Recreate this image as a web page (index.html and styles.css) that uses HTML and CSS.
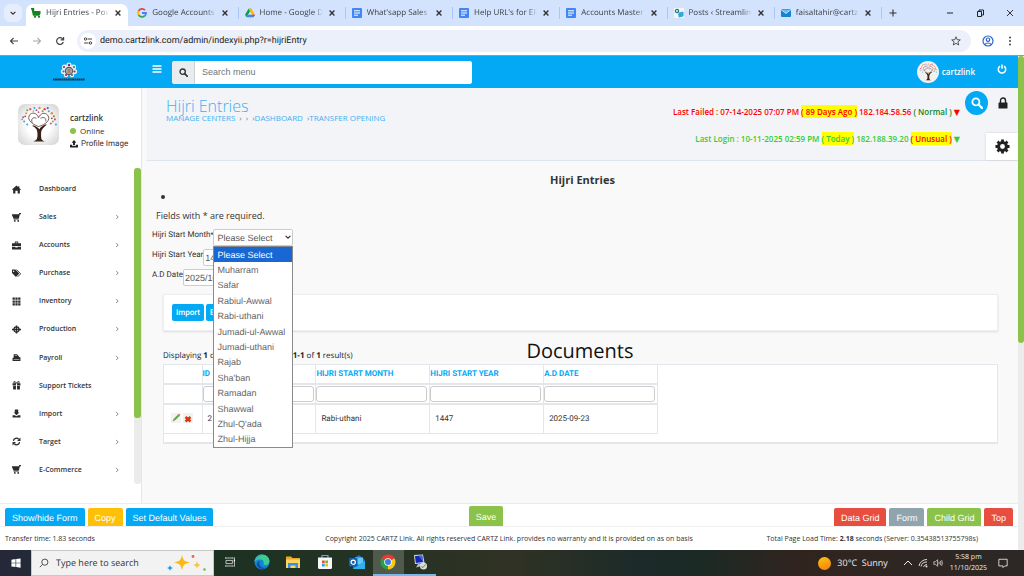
FILE: index.html
```html
<!DOCTYPE html>
<html lang="en">
<head>
<meta charset="utf-8">
<meta name="viewport" content="width=device-width, initial-scale=1">
<title>Hijri Entries</title>
<link rel="stylesheet" href="styles.css">
</head>
<body>
<svg class="sprite" aria-hidden="true">
  <symbol id="i-x" viewBox="0 0 10 10"><path d="M2 2l6 6M8 2l-6 6" stroke="currentColor" stroke-width="1.7" fill="none"/></symbol>
  <symbol id="i-doc" viewBox="0 0 10 10"><rect width="10" height="10" rx="1" fill="#4285f4"/><path d="M2 2.8h6M2 5h6M2 7.2h4" stroke="#fff" stroke-width="1"/></symbol>
  <symbol id="i-right" viewBox="0 0 10 10"><path d="M3.5 1.5L7 5 3.5 8.5" stroke="currentColor" stroke-width="1.6" fill="none"/></symbol>
  <symbol id="i-cart" viewBox="0 0 16 16"><path d="M0 2h12l1-2h3v2h-2l-2 8H4v1h8v1H3v-2L0 4z" fill="currentColor"/><circle cx="5" cy="14" r="1.6" fill="currentColor"/><circle cx="11" cy="14" r="1.6" fill="currentColor"/></symbol>
  <symbol id="i-search" viewBox="0 0 16 16"><circle cx="6.5" cy="6.5" r="4.7" fill="none" stroke="currentColor" stroke-width="2.4"/><path d="M10 10l4.5 4.5" stroke="currentColor" stroke-width="3" stroke-linecap="round"/></symbol>
  <symbol id="i-tree" viewBox="0 0 40 40">
    <path d="M15 36.500c3-1 4-2 4-7 0-4-1-6-5-8l.6-.8c3 1 5 2 6.200 4 1.200-2 3-4 6.500-5l.6.8c-4 3-5.400 5-5.400 9 0 5 .5 6 3.500 7z" fill="#3b2015"/>
    <path d="M20 22C12 19 8 14 12 10c3-2.500 7-.5 8 3.500 2-4.500 6-6 9-2.500 3.500 4.500-2 9-9 11zM14 18c-2-3 1-6 4-4M27 17c1-3-2-5-5-3" fill="none" stroke="#6b5448" stroke-width="0.9"/>
    <g fill="#e8457c"><circle cx="5" cy="13" r="1"/><circle cx="12" cy="5" r="1.1"/><circle cx="26" cy="5" r="1.2"/><circle cx="36" cy="15" r="1"/><circle cx="20" cy="8" r=".9"/><circle cx="32" cy="19" r="1"/></g>
    <g fill="#f58a3c"><circle cx="8" cy="9" r="1"/><circle cx="21" cy="4" r="1.2"/><circle cx="33" cy="9" r="1.2"/><circle cx="15" cy="7" r=".8"/></g>
    <g fill="#42a5dd"><circle cx="6" cy="17" r="1"/><circle cx="16" cy="4" r="1"/><circle cx="30" cy="7" r="1"/><circle cx="37" cy="20" r="1"/><circle cx="9" cy="20" r="1"/></g>
    <g fill="#65ad3d"><circle cx="9" cy="6" r="1"/><circle cx="24" cy="7" r="1"/><circle cx="35" cy="12" r="1.1"/><circle cx="34" cy="17" r=".9"/><circle cx="4" cy="15" r=".8"/></g>
    <g fill="#8c4ba6"><circle cx="18" cy="6" r=".9"/><circle cx="29" cy="4" r="1"/><circle cx="7" cy="12" r=".9"/><circle cx="33" cy="14" r=".9"/></g>
  </symbol>
</svg>

<div class="browser">
  <div class="tabstrip">
    <button class="tab-search" aria-label="Search tabs"><svg viewBox="0 0 10 10"><path d="M2 3.5l3 3 3-3" stroke="#333" stroke-width="1.5" fill="none"/></svg></button>
    <div class="tabs">
      <div class="tab tab-active"><svg class="fav" viewBox="0 0 10 10"><path d="M0 .5h2.500v5.800H9M1 .5L2.500 7h6" stroke="#14851d" stroke-width="1.400" fill="none"/><path d="M3 3h6.500v3H3z" fill="#14851d"/><circle cx="4" cy="8.800" r="1.100" fill="#14851d"/><circle cx="8" cy="8.800" r="1.100" fill="#14851d"/></svg><span>Hijri Entries - Power</span><button aria-label="Close tab"><svg><use href="#i-x"/></svg></button></div>
      <div class="tab"><svg class="fav" viewBox="0 0 10 10" fill="none" stroke-width="1.800"><path d="M8 2.200A4 4 0 0 0 1.600 3" stroke="#ea4335"/><path d="M1.600 3a4 4 0 0 0 0 4" stroke="#fbbc05"/><path d="M1.600 7a4 4 0 0 0 6 1" stroke="#34a853"/><path d="M7.600 8A4 4 0 0 0 9 5H5" stroke="#4285f4"/></svg><span>Google Accounts</span><button aria-label="Close tab"><svg><use href="#i-x"/></svg></button></div>
      <div class="tab"><svg class="fav" viewBox="0 0 10 10"><path d="M3.500.7h3L3 6.800 1.600 9.300 0 6.700z" fill="#0f9d58"/><path d="M3.500.7h3L10 6.700H7z" fill="#ffba00"/><path d="M3 6.700h7L8.400 9.300H1.600z" fill="#4285f4"/><path d="M7 6.700h3L8.400 9.300z" fill="#ea4335"/></svg><span>Home - Google Drive</span><button aria-label="Close tab"><svg><use href="#i-x"/></svg></button></div>
      <div class="tab"><svg class="fav"><use href="#i-doc"/></svg><span>What'sapp Sales Ma</span><button aria-label="Close tab"><svg><use href="#i-x"/></svg></button></div>
      <div class="tab"><svg class="fav"><use href="#i-doc"/></svg><span>Help URL's for ERP S</span><button aria-label="Close tab"><svg><use href="#i-x"/></svg></button></div>
      <div class="tab"><svg class="fav"><use href="#i-doc"/></svg><span>Accounts Master Da</span><button aria-label="Close tab"><svg><use href="#i-x"/></svg></button></div>
      <div class="tab"><svg class="fav" viewBox="0 0 10 10"><rect width="10" height="10" rx="1" fill="#f4f6e8"/><circle cx="3" cy="3" r="1.600" fill="none" stroke="#167a9c" stroke-width="1.300"/><path d="M5 5l4-1v4l-4 1zM4 6l3 3" fill="#35a8d8" stroke="#35a8d8"/></svg><span>Posts ‹ Streamline Y</span><button aria-label="Close tab"><svg><use href="#i-x"/></svg></button></div>
      <div class="tab"><svg class="fav" viewBox="0 0 10 10"><rect y="1" width="10" height="8" rx="1" fill="#1483d0"/><path d="M0 1.500l5 4 5-4" fill="#5cc0f7" stroke="#fff" stroke-width=".7"/></svg><span>faisaltahir@cartzlink</span><button aria-label="Close tab"><svg><use href="#i-x"/></svg></button></div>
    </div>
    <div class="window-controls">
      <button aria-label="New tab"><svg viewBox="0 0 10 10"><path d="M5 1.500v7M1.500 5h7" stroke="#333" stroke-width="1.100"/></svg></button>
      <button class="push" aria-label="Minimize"><svg viewBox="0 0 10 10"><path d="M2 5h6" stroke="#222"/></svg></button>
      <button aria-label="Restore"><svg viewBox="0 0 10 10"><path d="M2.500 3.500h4v5h-4zM4 3.500V2h4.500v5H6.500" stroke="#222" fill="none"/></svg></button>
      <button aria-label="Close"><svg viewBox="0 0 10 10"><path d="M2 2l6 6M8 2L2 8" stroke="#222" stroke-width=".9"/></svg></button>
    </div>
  </div>
  <div class="toolbar">
    <button aria-label="Back"><svg viewBox="0 0 10 10"><path d="M9 5H1.500M4.500 2L1.500 5l3 3" stroke="#444" stroke-width="1.100" fill="none"/></svg></button>
    <button aria-label="Forward"><svg viewBox="0 0 10 10"><path d="M1 5h7.500M5.500 2l3 3-3 3" stroke="#aaa" stroke-width="1.100" fill="none"/></svg></button>
    <button aria-label="Reload"><svg viewBox="0 0 10 10"><path d="M8.300 6A3.400 3.400 0 1 1 7.500 2.700L8.500 3.700M8.600 1v2.900H5.700" stroke="#444" stroke-width="1.200" fill="none"/></svg></button>
    <div class="address">
      <button class="site-info" aria-label="Site information"><svg viewBox="0 0 10 10"><path d="M4.500 3H9M1 7h4.500" stroke="#444" stroke-width="1.100"/><circle cx="2.500" cy="3" r="1.200" fill="none" stroke="#444"/><circle cx="7.500" cy="7" r="1.200" fill="none" stroke="#444"/></svg></button>
      <input type="text" aria-label="Address" value="demo.cartzlink.com/admin/indexyii.php?r=hijriEntry">
      <button aria-label="Bookmark"><svg viewBox="0 0 10 10"><path d="M5 .8l1.200 2.900 3.100.2-2.400 2 .8 3.100L5 7.300 2.300 9l.8-3.100-2.400-2 3.100-.2z" fill="none" stroke="#444" stroke-width=".9"/></svg></button>
    </div>
    <button class="profile" aria-label="Profile"><svg viewBox="0 0 12 12"><circle cx="6" cy="6" r="5" fill="none" stroke="#2f67c8" stroke-width="1.200"/><circle cx="6" cy="4.700" r="1.700" fill="none" stroke="#2f67c8" stroke-width="1.200"/><path d="M3 9.500c1-2 5-2 6 0" fill="none" stroke="#2f67c8" stroke-width="1.200"/></svg></button>
    <button aria-label="Menu"><svg viewBox="0 0 10 10" fill="#444"><circle cx="5" cy="1.500" r="1"/><circle cx="5" cy="5" r="1"/><circle cx="5" cy="8.500" r="1"/></svg></button>
  </div>
</div>

<div class="viewport">
  <div class="page">
    <header class="app-header">
      <a class="logo" href="#" aria-label="Cart group"><svg viewBox="0 0 34 20"><g fill="#e8eef0"><circle cx="17" cy="3" r="2.600"/><circle cx="12.500" cy="5" r="2.600"/><circle cx="21.500" cy="5" r="2.600"/><circle cx="11.500" cy="9.500" r="2.600"/><circle cx="22.500" cy="9.500" r="2.600"/><circle cx="14" cy="13" r="2.300"/><circle cx="20" cy="13" r="2.300"/></g><circle cx="17" cy="9" r="3.600" fill="#a9b8b2" stroke="#5a5a62" stroke-width="1.200"/><g fill="#8d2a79"><circle cx="17" cy="3" r="1.200"/><circle cx="12" cy="5" r="1.100"/><circle cx="22.500" cy="9.500" r="1.100"/><circle cx="14" cy="13" r="1.100"/></g><g fill="#2b8a55"><circle cx="22" cy="5" r="1.100"/><circle cx="11.500" cy="9.500" r="1.100"/><circle cx="20" cy="13" r="1.100"/></g><path d="M15.500 8h3M15.500 10h3" stroke="#c0392b" stroke-width="1"/><path d="M1 17.500h32" stroke="#12344e" stroke-width="1.800" stroke-dasharray="1.500 .4 2 .4"/></svg></a>
      <button class="burger" aria-label="Toggle menu"><svg viewBox="0 0 10 10"><path d="M0.500 2h9M.5 5h9M.5 8h9" stroke="#fff" stroke-width="1.400"/></svg></button>
      <form class="menu-search">
        <button type="button" aria-label="Search"><svg><use href="#i-search"/></svg></button>
        <input type="text" placeholder="Search menu" aria-label="Search menu">
      </form>
      <a class="user" href="#"><svg><use href="#i-tree"/></svg>cartzlink</a>
      <button class="power" aria-label="Log out"><svg viewBox="0 0 10 10"><path d="M3 2.200a3.700 3.700 0 1 0 4 0M5 .5v4.300" stroke="#fff" stroke-width="1.500" fill="none"/></svg></button>
    </header>

    <div class="workspace">
      <aside class="sidebar">
        <div class="account">
          <svg class="portrait"><use href="#i-tree"/></svg>
          <div class="account-text">
            <strong>cartzlink</strong>
            <span><i class="dot"></i>Online</span>
            <a href="#"><svg viewBox="0 0 10 10"><path d="M5 0l3 3.500H6.200V6.500H3.800V3.500H2zM0 6h2.800v1.500h4.400V6H10v3.500H0z" fill="#222"/></svg>Profile Image</a>
          </div>
        </div>
        <div class="menu-scroll">
          <nav class="menu">
            <a href="#"><svg viewBox="0 0 16 16"><path d="M8 1L0 8l1 1 1-.8V15h4v-5h4v5h4V8.200l1 .8 1-1-3-2.600V2h-2v1.600z" fill="currentColor"/></svg><span>Dashboard</span></a>
            <a href="#"><svg><use href="#i-cart"/></svg><span>Sales</span><svg class="arrow"><use href="#i-right"/></svg></a>
            <a href="#"><svg viewBox="0 0 16 16"><path d="M5 4V1h6v3h5v5H0V4zm1.500 0h3V2.500h-3zM0 10h6v1.500h4V10h6v5H0z" fill="currentColor"/></svg><span>Accounts</span><svg class="arrow"><use href="#i-right"/></svg></a>
            <a href="#"><svg viewBox="0 0 16 16"><path d="M0 1h6l7 7-6 6-7-7z" fill="currentColor"/><circle cx="3" cy="4" r="1.200" fill="#fff"/><path d="M8 1l7.500 7.500L10 14" fill="none" stroke="currentColor" stroke-width="1.500"/></svg><span>Purchase</span><svg class="arrow"><use href="#i-right"/></svg></a>
            <a href="#"><svg viewBox="0 0 16 16"><path d="M1 1h4v4H1zm5 0h4v4H6zm5 0h4v4h-4zM1 6h4v4H1zm5 0h4v4H6zm5 0h4v4h-4zM1 11h4v4H1zm5 0h4v4H6zm5 0h4v4h-4z" fill="currentColor"/></svg><span>Inventory</span><svg class="arrow"><use href="#i-right"/></svg></a>
            <a href="#"><svg viewBox="0 0 16 16"><circle cx="8" cy="8" r="4.500" fill="none" stroke="currentColor" stroke-width="2.200"/><path d="M8 1v14M0 8h16" stroke="currentColor" stroke-width="2.400"/></svg><span>Production</span><svg class="arrow"><use href="#i-right"/></svg></a>
            <a href="#"><svg viewBox="0 0 16 16"><path d="M3 2h6l4 5 2 1v6H1V9l2-1zM5 4.500v1h4v-1zM3 11h10v1H3z" fill="currentColor" fill-rule="evenodd"/></svg><span>Payroll</span><svg class="arrow"><use href="#i-right"/></svg></a>
            <a href="#"><svg viewBox="0 0 16 16"><path d="M1 4h6v4H1zm8 0h6v4H9zM2 9h5v6H2zm7 0h5v6H9z" fill="currentColor"/><path d="M7 4C2 4 2 1 4 1s3 1 4 3c1-2 2-3 4-3s2 3-3 3" fill="none" stroke="currentColor" stroke-width="1.600"/></svg><span>Support Tickets</span></a>
            <a href="#"><svg viewBox="0 0 16 16"><path d="M5 1h6v5h2l-5 5-5-5h2zM1 11h4l3 2 3-2h4v4H1z" fill="currentColor"/></svg><span>Import</span><svg class="arrow"><use href="#i-right"/></svg></a>
            <a href="#"><svg viewBox="0 0 16 16"><path d="M2.500 7A5.500 5.500 0 0 1 12 4M13.500 9A5.500 5.500 0 0 1 4 12" fill="none" stroke="currentColor" stroke-width="2.200"/><path d="M15 1v6H9zM1 15V9h6z" fill="currentColor"/></svg><span>Target</span><svg class="arrow"><use href="#i-right"/></svg></a>
            <a href="#"><svg><use href="#i-cart"/></svg><span>E-Commerce</span><svg class="arrow"><use href="#i-right"/></svg></a>
          </nav>
          <div class="menu-track"><div class="menu-thumb"></div></div>
        </div>
      </aside>

      <main class="content">
        <section class="page-head">
          <div class="crumbs">
            <h1>Hijri Entries</h1>
            <p><a href="#">MANAGE CENTERS</a><b>›</b><b>›</b><b>›<a href="#">DASHBOARD</a></b><b>›<a href="#">TRANSFER OPENING</a></b></p>
          </div>
          <div class="logins">
            <p class="failed">Last Failed : 07-14-2025 07:07 PM <mark>( 89 Days Ago )</mark> 182.184.58.56 <span class="normal">( Normal )</span> <i>▼</i></p>
            <p class="login">Last Login : 10-11-2025 02:59 PM <mark>( Today )</mark> 182.188.39.20 <mark class="unusual">( Unusual )</mark> <i>▼</i></p>
          </div>
          <div class="tools">
            <div class="tool-row">
              <button class="round" aria-label="Find"><svg><use href="#i-search"/></svg></button>
              <button class="lock" aria-label="Lock"><svg viewBox="0 0 10 12"><path d="M2.500 6V3.500a2.500 2.500 0 0 1 5 0V6" fill="none" stroke="#222" stroke-width="1.400"/><rect x=".5" y="5.500" width="9" height="6" rx=".6" fill="#222"/></svg></button>
            </div>
            <button class="gear" aria-label="Settings"><svg viewBox="0 0 16 16"><circle cx="8" cy="8" r="4.200" fill="none" stroke="#222" stroke-width="3.200"/><path d="M8 .5v3M8 12.500v3M.5 8h3M12.500 8h3M2.700 2.700l2 2M11.300 11.300l2 2M13.300 2.700l-2 2M4.700 11.300l-2 2" stroke="#222" stroke-width="3"/></svg></button>
          </div>
        </section>

        <h2 class="form-title">Hijri Entries</h2>
        <ul class="messages"><li></li></ul>
        <p class="hint">Fields with * are required.</p>
        <form class="entry-form">
          <div class="field">
            <label for="month">Hijri Start Month<span class="required">*</span></label>
            <div class="month">
              <select id="month"><option>Please Select</option></select>
              <svg class="caret" viewBox="0 0 10 10"><path d="M2 3.500l3 3 3-3" stroke="#333" stroke-width="1.500" fill="none"/></svg>
              <ul class="options">
                <li class="chosen">Please Select</li><li>Muharram</li><li>Safar</li><li>Rabiul-Awwal</li><li>Rabi-uthani</li><li>Jumadi-ul-Awwal</li><li>Jumadi-uthani</li><li>Rajab</li><li>Sha'ban</li><li>Ramadan</li><li>Shawwal</li><li>Zhul-Q'ada</li><li>Zhul-Hijja</li>
              </ul>
            </div>
          </div>
          <div class="field"><label for="year">Hijri Start Year</label><input id="year" type="text" value="1447"></div>
          <div class="field"><label for="date">A.D Date</label><input id="date" type="text" value="2025/10/11"></div>
        </form>

        <div class="actions"><button>Import</button><button>Export</button></div>

        <div class="grid-head">
          <p>Displaying <b>1</b> of <b>1</b> pages, Displaying <b>1-1</b> of <b>1</b> result(s)</p>
          <h2>Documents</h2>
        </div>
        <div class="grid-box">
          <table>
            <colgroup><col class="c-tools"><col><col><col><col></colgroup>
            <thead>
              <tr><th></th><th><a href="#">ID</a></th><th><a href="#">HIJRI START MONTH</a></th><th><a href="#">HIJRI START YEAR</a></th><th><a href="#">A.D DATE</a></th></tr>
              <tr class="filters"><td></td><td><input aria-label="Filter ID"></td><td><input aria-label="Filter month"></td><td><input aria-label="Filter year"></td><td><input aria-label="Filter date"></td></tr>
            </thead>
            <tbody>
              <tr><td class="row-tools"><button aria-label="Edit"><svg viewBox="0 0 10 10"><rect width="10" height="10" fill="#f2f2f2"/><path d="M2 8l1-2.500L7 1.500l1.500 1.500-4 4z" fill="#63a84a"/><path d="M1.500 8.500l1-2 1 1zM7 1.500l1-.8 1.200 1.200-.7 1z" fill="#d0604c"/></svg></button><button aria-label="Delete"><svg viewBox="0 0 10 10"><rect width="10" height="10" fill="#f2f2f2"/><path d="M2.500 4l5 4.500M7.500 4l-5 4.500" stroke="#d8350f" stroke-width="2.400"/></svg></button></td><td>2</td><td>Rabi-uthani</td><td>1447</td><td>2025-09-23</td></tr>
            </tbody>
          </table>
        </div>
      </main>
    </div>

    <div class="bottom-bar">
      <div class="group"><button class="blue">Show/hide Form</button><button class="amber">Copy</button><button class="blue">Set Default Values</button></div>
      <button class="green save">Save</button>
      <div class="group end"><button class="red">Data Grid</button><button class="slate">Form</button><button class="green">Child Grid</button><button class="red">Top</button></div>
    </div>
    <footer class="footer">
      <span>Transfer time: 1.83 seconds</span>
      <span>Copyright 2025 CARTZ Link. All rights reserved CARTZ Link. provides no warranty and it is provided on as on basis</span>
      <span class="load">Total Page Load Time: <b>2.18</b> seconds (Server: 0.35438513755798s)</span>
    </footer>
  </div>
  <div class="scroll-track"><div class="scroll-thumb"></div></div>
</div>

<div class="taskbar">
  <button class="start" aria-label="Start"><svg viewBox="0 0 12 12"><path d="M.5 2L5.500 1.300V5.700H.5zM6.200 1.200L11.500.5v5.200H6.200zM.5 6.400h5v4.400L.5 10.100zM6.200 6.400h5.300v5.200l-5.300-.7z" fill="#fff"/></svg></button>
  <label class="search-box"><svg viewBox="0 0 12 12"><circle cx="7" cy="5" r="3.700" fill="none" stroke="#333"/><path d="M4.300 7.700L1 11" stroke="#333"/></svg><input type="text" placeholder="Type here to search"><svg class="sparkle" viewBox="0 0 40 18"><path d="M15 1c1.500 6 2 6 8 7.500-6 1.500-6.500 2-8 7.500-1.500-5.500-2-6-8-7.500 6-1.500 6.500-1.500 8-7.500z" fill="#fbb917"/><path d="M30 7c.8 3 1 3 4 4-3 1-3.200 1-4 4-.8-3-1-3-4-4 3-1 3.200-1 4-4z" fill="#fcc53a"/><path d="M3 11c.6 2 1 2.400 3 3-2 .6-2.400 1-3 3-.6-2-1-2.400-3-3 2-.6 2.400-1 3-3z" fill="#1d9be8"/><circle cx="26" cy="2.500" r="1.400" fill="#ef6644"/><circle cx="37.500" cy="15.500" r="1.300" fill="#6cc04a"/></svg></label>
  <div class="apps">
    <button aria-label="Task view"><svg viewBox="0 0 20 20"><path d="M5 5h8M5 15h8M5 8h8v4H5zM15.500 4v12M4.500 4v2M13.500 4v2M4.500 14v2M13.500 14v2" stroke="#dfe3df" fill="none"/><path d="M14.700 7h1.600v2.500h-1.600z" fill="#fff"/></svg></button>
    <button aria-label="Edge"><svg viewBox="0 0 16 16"><circle cx="8" cy="8" r="7.500" fill="#1684d4"/><path d="M.6 7C1.500 2 5 .5 8 .5c4.500 0 7.500 3.200 7.500 6.500 0 2.500-2 4-4 4-1.500 0-2.300-.6-2-1.200C10.500 8 9 5.500 6.500 5.500 4 5.500 1.500 6 .6 8z" fill="#3ccb93"/><path d="M.6 7C2 2.500 5 .8 8.500 1.200 5 2 3 4 .6 7z" fill="#27a9df"/><path d="M6 7c-2 3 .5 7 5 6.800 1.200 0 2.500-.7 3-1.200C11 15.500 6 16 3.500 12.500 2 10 3.500 7.500 6 7z" fill="#0d4f9e"/></svg></button>
    <button aria-label="File Explorer"><svg viewBox="0 0 16 16"><path d="M1 2.500h5l1.500 1.500H15v10H1z" fill="#e9a825"/><path d="M1 5.500h14V14H1z" fill="#fbd667"/><path d="M3 9h10v5h-2.500v-2.500h-5V14H3z" fill="#3f8edb"/></svg></button>
    <button aria-label="Store"><svg viewBox="0 0 16 16"><path d="M5 4V1.500h6V4" stroke="#4ab1e8" fill="none" stroke-width="1.200"/><path d="M1 3.500h14v10q0 1.500-1.500 1.500h-11Q1 15 1 13.500z" fill="#f4f6f7"/><path d="M5 6.500h2.700v2.700H5z" fill="#e8502c"/><path d="M8.300 6.500H11v2.700H8.300z" fill="#77b81d"/><path d="M5 9.800h2.700v2.700H5z" fill="#24a2e8"/><path d="M8.300 9.800H11v2.700H8.300z" fill="#fbb714"/></svg></button>
    <button aria-label="Outlook"><svg viewBox="0 0 16 16"><path d="M4 5l6-4 6 5v8.500H4z" fill="#1c74c9"/><path d="M6 3.500h8V9l-4 2-4-2z" fill="#63c9f5"/><path d="M4 14.500L16 7v8H4z" fill="#2fb1ee"/><rect y="4" width="8.500" height="8.500" rx="1" fill="#0f62b5"/><circle cx="4.200" cy="8.200" r="2.100" fill="none" stroke="#fff" stroke-width="1.200"/></svg></button>
    <button class="running current" aria-label="Chrome"><svg viewBox="0 0 16 16"><path d="M8 8L1.500 4.300A7.500 7.500 0 0 1 14.500 4.300z" fill="#e53c30"/><path d="M8 8l6.500-3.700A7.500 7.500 0 0 1 8 15.500z" fill="#fbc716"/><path d="M8 8v7.500A7.500 7.500 0 0 1 1.500 4.300z" fill="#2b9e47"/><path d="M8 4h6.300" stroke="#e53c30" stroke-width="1.500"/><circle cx="8" cy="8" r="3.800" fill="#fff"/><circle cx="8" cy="8" r="3" fill="#3b7de8"/></svg></button>
    <button class="running" aria-label="Remote Desktop"><svg viewBox="0 0 16 16"><path d="M2 1l9-.5 1.500 8.500L3 10z" fill="#d8dde4"/><path d="M3 2l7.200-.4L11.300 8 3.800 9z" fill="#1428b4"/><path d="M6.500 1.800L10.200 1.600 11.300 8z" fill="#4169e0"/><path d="M6 10l3-.4 1 2.400-6 1.500z" fill="#b9bec6"/><circle cx="11.500" cy="12" r="3.500" fill="#d9dedb"/><path d="M9.500 12.500l1.500 1 2.500-3" stroke="#3c9a48" fill="none"/></svg></button>
  </div>
  <div class="tray">
    <span class="weather"><i class="sun"></i>30°C&nbsp; Sunny</span>
    <svg viewBox="0 0 10 10"><path d="M1 7l4-4 4 4" stroke="#eee" fill="none"/></svg>
    <svg viewBox="0 0 10 10"><path d="M1 8A8 8 0 0 1 9 1.500M3 8.500A6 6 0 0 1 9 4M5.500 9A4 4 0 0 1 9 6.500" stroke="#ddd" fill="none"/><circle cx="8.500" cy="8.500" r="1" fill="#ddd"/></svg>
    <svg viewBox="0 0 12 10"><path d="M1 3.500h2L5.500 1v8L3 6.500H1zM7 3.500q1 1.500 0 3M8.700 2.500q1.500 2.500 0 5M10.300 1.500q2 3.500 0 7" stroke="#ddd" stroke-width=".9" fill="none"/></svg>
    <span class="clock"><time>5:58 pm</time><time>11/10/2025</time></span>
    <button aria-label="Notifications"><svg viewBox="0 0 12 12"><path d="M1 1.500h10v8H8L6 11.500v-2H1z" stroke="#eee" fill="none"/></svg></button>
  </div>
</div>
</body>
</html>
```
FILE: styles.css
```css
* { box-sizing: border-box; }
body, h1, h2, p, ul { margin: 0; padding: 0; }
body {
  display: flex;
  flex-direction: column;
  min-height: 100vh;
  font: 8px/12px "Open Sans", "Noto Sans", sans-serif;
  color: #333;
  background: #fff;
}
button { padding: 0; border: 0; background: none; font: inherit; color: inherit; text-rendering: inherit; }
input, select { min-width: 0; padding: 0; border: 0; font: inherit; color: inherit; text-rendering: inherit; }
a { color: inherit; text-decoration: none; }
svg { display: block; flex: none; width: 10px; height: 10px; }
.sprite { position: absolute; width: 0; height: 0; }

/* Browser frame */
.browser { border-bottom: 1px solid #8b9da8; }
.tabstrip { display: flex; height: 26px; background: #d3e2fd; text-rendering: geometricPrecision; }
.tab-search { display: grid; place-items: center; width: 18px; height: 18px; margin: 4px; border-radius: 6px; background: #e6eefd; }
.tab-search svg { width: 8px; height: 8px; }
.tabs { display: flex; flex: 1; min-width: 0; }
.tab { display: flex; flex: 1; align-items: center; gap: 5px; min-width: 0; height: 26px; padding: 0 9px 0 6px; border-right: 1px solid #a9c7f7; border-image: linear-gradient(transparent 30%, #a9c7f7 30%, #a9c7f7 70%, transparent 70%) 1; color: #3c4046; }
.tab span { flex: 1; overflow: hidden; white-space: nowrap; mask-image: linear-gradient(90deg, #000 85%, transparent); }
.tab button svg { width: 8px; height: 8px; color: #333; }
.tab-active { height: 22px; margin: 4px 3px 0 0; padding: 0 6px 4px 5px; border: 0; border-radius: 7px 7px 0 0; background: #fff; }
.window-controls { display: flex; align-items: center; gap: 20px; width: 142px; padding: 0 9px 0 6px; }
.window-controls .push { margin-left: auto; }
.toolbar { display: flex; align-items: center; gap: 13px; height: 29px; padding: 0 9px; background: #fff; text-rendering: geometricPrecision; }
.address { display: flex; align-items: center; gap: 4px; flex: 1; height: 22px; padding: 0 10px 0 3px; margin-left: -1px; border-radius: 11px; background: #ebf0fa; }
.address input { flex: 1; font: 9px Roboto, sans-serif; background: none; color: #222; }
.site-info { display: grid; place-items: center; width: 16px; height: 16px; border-radius: 50%; background: #fff; }
.profile svg { width: 12px; height: 12px; }
.profile { margin: 0 -2px 0 -2px; }

/* Page frame */
.viewport { display: flex; flex: 1; }
.page { display: flex; flex-direction: column; flex: 1; min-width: 0; }
.scroll-track { width: 6px; background: #ececec; }
.scroll-thumb { height: 58%; border-radius: 3px; background: #8bc34a; }

.app-header { display: flex; align-items: center; height: 32px; background: #03a9f4; }
.logo { margin-left: 52px; }
.logo svg { width: 34px; height: 20px; }
.burger { margin: 0 10px 6px 66px; }
.menu-search { display: flex; width: 300px; height: 23px; border-radius: 3px; overflow: hidden; background: #fff; }
.menu-search button { display: grid; place-items: center; width: 23px; border-right: 1px solid #ccd2d8; background: #e9ecef; color: #333; }
.menu-search svg { width: 9px; height: 9px; }
.menu-search input { flex: 1; padding: 0 7px; font: 9px "Liberation Sans", sans-serif; }
.menu-search input::placeholder { color: #6c757d; opacity: 1; }
.user { display: flex; align-items: center; gap: 3px; margin-left: auto; color: #fff; font-weight: 600; }
.user svg { width: 22px; height: 22px; padding: 1px; border-radius: 50%; background: #f2f1ef; }
.power { margin: 0 11px 6px 22px; }

.workspace { display: flex; flex: 1; }
.sidebar { display: flex; flex-direction: column; width: 142px; border-right: 1px solid #e3e6ea; background: #fff; }
.account { display: flex; gap: 11px; height: 80px; padding: 16px 0 0 18px; }
.portrait { width: 41px; height: 41px; border-radius: 7px; background: radial-gradient(#fff 40%, #cfcfcf); }
.account-text { display: flex; flex-direction: column; gap: 1px; padding-top: 8px; }
.account-text span, .account-text a { display: flex; align-items: center; gap: 4px; }
.account-text strong { font-weight: 600; }
.account-text a { gap: 3px; font-family: Roboto, sans-serif; text-rendering: geometricPrecision; }
.account-text a svg { width: 8px; height: 8px; }
.dot { width: 6px; height: 6px; border-radius: 50%; background: #8bc34a; }
.menu-scroll { display: flex; flex: 1; margin-bottom: 19px; }
.menu { display: grid; grid-auto-rows: 1fr; flex: 1; padding: 7px 14px 0 12px; font-size: 7px; font-weight: 600; }
.menu a { display: flex; align-items: center; }
.menu svg { width: 9px; height: 9px; margin-right: 18px; color: #2b2b2b; }
.menu span { flex: 1; }
.menu .arrow { width: 6px; height: 6px; margin: 0; color: #888; }
.menu-track { width: 7px; border-radius: 3px; background: #ebebeb; }
.menu-thumb { height: 79%; border-radius: 3px; background: #8bc34a; }

.content { flex: 1; min-width: 0; background: #f9f9f9; }
.page-head { display: flex; justify-content: space-between; height: 73px; margin-left: 5px; border-bottom: 1px solid #dfe5ec; background: #f3f4f7; }
.crumbs { flex: 1; padding: 10px 0 0 19px; color: #42b0f2; }
.crumbs h1 { font-size: 16px; line-height: 16px; font-weight: 300; }
.crumbs p { display: flex; gap: 4px; line-height: 8px; }
.crumbs b { font-weight: 400; color: #777; }
.crumbs b a { color: #42b0f2; }
.logins { display: flex; flex-direction: column; gap: 14px; padding-top: 18px; font-weight: 600; text-align: right; }
.logins i { font: 8px/12px "DejaVu Sans", sans-serif; }
.failed { color: #f00; }
.login { color: #32cd32; }
.logins mark { padding: 1px 0; background: #ff0; color: inherit; }
.logins .unusual { color: #f00; }
.logins .normal { color: #14851d; }
.tools { display: flex; flex-direction: column; align-items: flex-end; gap: 18px; padding: 3px 0 0 5px; }
.tool-row { display: flex; align-items: center; gap: 10px; padding-right: 10px; }
.round { display: grid; place-items: center; width: 23px; height: 24px; border-radius: 50%; background: #03a9f4; color: #fff; }
.round svg { width: 12px; height: 12px; }
.lock svg { height: 12px; }
.gear { display: grid; place-items: center; width: 32px; height: 29px; background: #fff; box-shadow: 0 0 2px #ccc; }
.gear svg { width: 15px; height: 15px; }

.form-title { margin: 11px 0 0 5px; font-size: 11px; line-height: 16px; font-weight: 700; text-align: center; }
.messages { padding-left: 33px; font-size: 10px; line-height: 16px; }
.messages li { min-height: 16px; }
.hint { margin: 6px 14px 7px; font-size: 9px; }
.entry-form { display: flex; flex-direction: column; gap: 3px; padding-left: 10px; font-family: Roboto, sans-serif; text-rendering: geometricPrecision; }
.field { display: flex; align-items: flex-start; height: 17px; }
.required { font-size: 7px; }
.entry-form input, .entry-form select { display: block; width: 80px; height: 17px; border: 1px solid #ccc; border-radius: 2px; background: #fff; color: #555; font: 9px "Liberation Sans", sans-serif; }
.entry-form select { padding-left: 3px; appearance: none; }
.entry-form input { padding: 0 1px; }
.month { position: relative; }
.caret { position: absolute; top: 4px; right: 1px; width: 8px; height: 8px; }
.options { position: absolute; z-index: 2; top: 17px; left: 0; display: grid; grid-auto-rows: 1fr; width: 80px; height: 202px; border: 1px solid #8a8a8a; background: #fff; list-style: none; font: 9px "Liberation Sans", sans-serif; color: #666; }
.options li { display: flex; align-items: center; padding-left: 3px; white-space: nowrap; }
.options .chosen { background: #1967d2; color: #fff; }

.actions { display: flex; gap: 2px; margin: 8px 20px 0 21px; padding: 9px 8px; height: 37px; border: 1px solid #eee; background: #fff; box-shadow: 0 1px 2px #ddd; text-rendering: geometricPrecision; }
.actions button { height: 17px; padding: 0 4px; border-radius: 2px; background: #03a9f4; color: #fff; font-family: Roboto, sans-serif; font-weight: 500; }
.grid-head { display: grid; grid-template-columns: 1fr auto 1fr; align-items: center; margin: 7px 21px 0; height: 26px; text-rendering: geometricPrecision; }
.grid-head p { padding-top: 10px; white-space: nowrap; color: #222; }
.grid-head h2 { font-size: 20px; line-height: 26px; font-weight: 400; color: #111; }
.grid-box { margin: 0 20px 0 21px; border: 1px solid #e3e6ea; border-width: 1px 1px 2px; padding-bottom: 8px; background: #fff; text-rendering: geometricPrecision; }
table { width: 494px; table-layout: fixed; border-collapse: collapse; font-family: Roboto, sans-serif; }
.c-tools { width: 38px; }
th, td { padding: 0; border: 1px solid #e3e6ea; border-top: 0; text-align: left; }
tr > :first-child { border-left: 0; }
th { height: 19px; color: #03a9f4; font-weight: 700; }
thead th { border-bottom-width: 2px; }
.filters td { height: 20px; border-bottom-width: 2px; }
.filters input { display: block; width: 111px; height: 16px; border: 1px solid #ccc; border-radius: 3px; background: #fff; }
tbody td { height: 29px; padding-left: 5px; }
.row-tools button { display: inline-block; margin: 3px 0 0 2px; }

.bottom-bar { display: grid; grid-template-columns: 46% auto 1fr; align-items: end; height: 24px; padding: 0 5px; border-top: 1px solid #ececec; border-bottom: 1px solid #f0f0f0; background: #fff; font: 9px "Liberation Sans", sans-serif; text-rendering: geometricPrecision; }
.group { display: flex; gap: 3px; }
.bottom-bar button { height: 18px; padding: 2px 7px 0; border-radius: 2px 2px 0 0; color: #fff; }
.bottom-bar .end { justify-content: flex-end; }
.bottom-bar .save { height: 20px; }
.blue { background: #03a9f4; }
.amber { background: #ffc107; }
.green { background: #8bc34a; }
.red { background: #e84e40; }
.slate { background: #90a4ae; }
.footer { display: grid; grid-template-columns: 1fr auto 1fr; align-items: center; height: 23px; padding: 0 5px; background: #fff; font-size: 7px; }
.load { padding-right: 35px; text-align: right; }

/* Desktop taskbar */
.taskbar { display: flex; height: 26px; color: #eee; background: linear-gradient(90deg, #25283a 0, #1c3122 21%, #233323 34%, #303224 50%, #1c2b29 62%, #1b2a25 68%, #31241f 78%, #2c2826 100%); text-rendering: geometricPrecision; }
.start { display: grid; place-items: center; width: 31px; }
.search-box { display: flex; align-items: center; gap: 7px; width: 183px; padding: 0 6px 0 7px; border: 1px solid #c8c8c8; background: #f2f2f2; }
.search-box input { flex: 1; font-size: 9px; background: none; }
.search-box input::placeholder { color: #333; opacity: 1; }
.search-box .sparkle { width: 40px; height: 18px; }
.apps { display: grid; grid-template-columns: repeat(7, 1fr); width: 222px; }
.apps button { display: grid; place-items: center; border-bottom: 2px solid transparent; }
.apps svg { width: 16px; height: 16px; }
.apps .running { border-color: #76b9ed; }
.apps .current { background: #4f5a4d; }
.tray { display: flex; align-items: center; gap: 5px; margin-left: auto; padding-right: 16px; }
.weather { display: flex; align-items: center; gap: 6px; margin-right: 10px; font-size: 9px; }
.sun { width: 13px; height: 13px; border-radius: 50%; background: linear-gradient(160deg, #ffc60b, #f47b12); }
.clock { display: flex; flex-direction: column; align-items: center; margin: 0 6px 0 2px; font-size: 7px; line-height: 11px; }
```
